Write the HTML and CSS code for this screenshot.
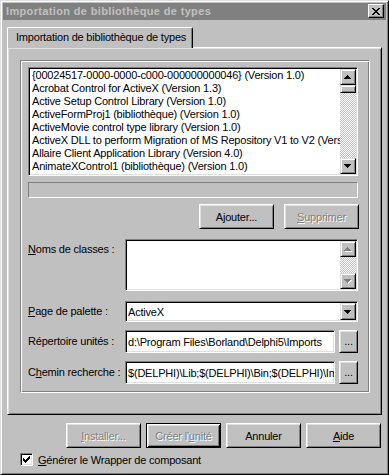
FILE: index.html
```html
<!DOCTYPE html>
<html lang="fr">
<head>
    <meta charset="UTF-8">
    <title>Importation de bibliothèque de types</title>
    <link rel="stylesheet" href="styles.css">
</head>
<body>
    <div class="window">
        <div class="titlebar">
            <span class="title">Importation de bibliothèque de types</span>
            <span class="close">
                <svg width="8" height="7" viewBox="0 0 8 7" shape-rendering="crispEdges">
                    <path d="M0 0h2v1H0z M6 0h2v1H6z M1 1h2v1H1z M5 1h2v1H5z M2 2h4v1H2z M3 3h2v1H3z M2 4h4v1H2z M1 5h2v1H1z M5 5h2v1H5z M0 6h2v1H0z M6 6h2v1H6z" fill="#000"/>
                </svg>
            </span>
        </div>

        <div class="tabs">
            <div class="tab">Importation de bibliothèque de types</div>
        </div>

        <div class="page">
            <div class="group">
                <div class="listbox sunken">
                    <div class="list">
                        <div>{00024517-0000-0000-c000-000000000046} (Version 1.0)</div>
                        <div>Acrobat Control for ActiveX (Version 1.3)</div>
                        <div>Active Setup Control Library (Version 1.0)</div>
                        <div>ActiveFormProj1 (bibliothèque) (Version 1.0)</div>
                        <div>ActiveMovie control type library (Version 1.0)</div>
                        <div>ActiveX DLL to perform Migration of MS Repository V1 to V2 (Version 1.0)</div>
                        <div>Allaire Client Application Library (Version 4.0)</div>
                        <div>AnimateXControl1 (bibliothèque) (Version 1.0)</div>
                        <div>AudioFile Control 1.0 Type Library (Version 1.0)</div>
                    </div>
                    <div class="scrollbar">
                        <span class="sbtn">
                            <svg width="14" height="14" viewBox="1 1 14 14" shape-rendering="crispEdges"><path d="M7 6h1v1h1v1h1v1h1v1H4V9h1V8h1V7h1z" fill="#000"/></svg>
                        </span>
                        <span class="thumb"></span>
                        <span class="track"></span>
                        <span class="sbtn">
                            <svg width="14" height="14" viewBox="1 1 14 14" shape-rendering="crispEdges"><path d="M4 6h7v1h-1v1h-1v1h-1v1H7V9H6V8H5V7H4z" fill="#000"/></svg>
                        </span>
                    </div>
                </div>

                <div class="status"></div>

                <div class="btnrow">
                    <button class="btn">Ajouter...</button>
                    <button class="btn disabled"><u>S</u>upprimer</button>
                </div>

                <div class="row top">
                    <label><u>N</u>oms de classes :</label>
                    <div class="memo sunken">
                        <div class="memo-text"></div>
                        <div class="scrollbar">
                            <span class="sbtn">
                                <svg width="14" height="14" viewBox="1 1 14 14" shape-rendering="crispEdges"><path d="M8 7h1v1h1v1h1v1h1v1H5v-1h1V9h1V8h1z" fill="#fff"/><path d="M7 6h1v1h1v1h1v1h1v1H4V9h1V8h1V7h1z" fill="#808080"/></svg>
                            </span>
                            <span class="track"></span>
                            <span class="sbtn">
                                <svg width="14" height="14" viewBox="1 1 14 14" shape-rendering="crispEdges"><path d="M5 7h7v1h-1v1h-1v1H9v1H8v-1H7V9H6V8H5z" fill="#fff"/><path d="M4 6h7v1h-1v1h-1v1h-1v1H7V9H6V8H5V7H4z" fill="#808080"/></svg>
                            </span>
                        </div>
                    </div>
                </div>

                <div class="row">
                    <label><u>P</u>age de palette :</label>
                    <div class="combo sunken">
                        <span class="field-text">ActiveX</span>
                        <span class="sbtn drop">
                            <svg width="14" height="15" viewBox="1 0 14 15" shape-rendering="crispEdges"><path d="M4 6h7v1h-1v1h-1v1h-1v1H7V9H6V8H5V7H4z" fill="#000"/></svg>
                        </span>
                    </div>
                </div>

                <div class="row">
                    <label>Répertoire unités :</label>
                    <div class="edit sunken"><span class="field-text">d:\Program Files\Borland\Delphi5\Imports</span></div>
                    <button class="btn small">...</button>
                </div>

                <div class="row">
                    <label>C<u>h</u>emin recherche :</label>
                    <div class="edit sunken"><span class="field-text">$(DELPHI)\Lib;$(DELPHI)\Bin;$(DELPHI)\Imports;$(DELPHI)\Projects\Bpl</span></div>
                    <button class="btn small">...</button>
                </div>
            </div>
        </div>

        <div class="footer">
            <button class="btn disabled"><u>I</u>nstaller...</button>
            <button class="btn default disabled">Créer l'<u>u</u>nité</button>
            <button class="btn">Annuler</button>
            <button class="btn"><u>A</u>ide</button>
        </div>

        <div class="check">
            <span class="checkbox">
                <svg width="7" height="7" viewBox="0 0 7 7" shape-rendering="crispEdges">
                    <path d="M0 2h1v3H0z M1 3h1v3H1z M2 4h1v3H2z M3 3h1v3H3z M4 2h1v3H4z M5 1h1v3H5z M6 0h1v3H6z" fill="#000"/>
                </svg>
            </span>
            <span><u>G</u>énérer le Wrapper de composant</span>
        </div>
    </div>
</body>
</html>
```

FILE: styles.css
```css
body {
    margin: 0;
    background-color: #c0c0c0;
}

* {
    box-sizing: border-box;
}

.window {
    width: 389px;
    height: 475px;
    background-color: #c0c0c0;
    border: 1px solid;
    border-color: #dfdfdf #000 #000 #dfdfdf;
    box-shadow: inset 1px 1px #fff, inset -1px -1px #808080;
    padding: 2px;
    display: flex;
    flex-direction: column;
    font-family: "Liberation Sans", Arial, sans-serif;
    font-size: 11px;
    letter-spacing: -0.2px;
    color: #000;
}

/* title bar */
.titlebar {
    height: 17px;
    background-color: #808080;
    color: #c0c0c0;
    display: flex;
    align-items: flex-start;
    padding-left: 3px;
}

.title {
    font-weight: bold;
    letter-spacing: 0.35px;
    line-height: 17px;
}

.close {
    margin-left: auto;
    margin-right: 2px;
    margin-top: 1px;
    width: 16px;
    height: 14px;
    display: flex;
    align-items: center;
    justify-content: center;
    background-color: #c0c0c0;
    border: 1px solid;
    border-color: #fff #000 #000 #fff;
    box-shadow: inset -1px -1px #808080;
}

/* tab */
.tabs {
    margin-top: 7px;
    padding-left: 4px;
    display: flex;
}

.tab {
    position: relative;
    z-index: 1;
    width: 186px;
    height: 21px;
    margin-bottom: -1px;
    background-color: #c0c0c0;
    border-top: 1px solid #fff;
    border-left: 1px solid #fff;
    border-right: 1px solid #000;
    border-radius: 2px 2px 0 0;
    box-shadow: inset -1px 0 #808080;
    padding-left: 8px;
    line-height: 19px;
    white-space: nowrap;
}

.page {
    margin-left: 4px;
    width: 375px;
    height: 368px;
    border: 1px solid;
    border-color: #fff #000 #000 #fff;
    box-shadow: inset 1px 1px #dfdfdf, inset -1px -1px #808080;
    padding: 12px 10px 0 12px;
}

.group {
    width: 350px;
    height: 333px;
    border: 1px solid;
    border-color: #808080 #fff #fff #808080;
    box-shadow: inset 1px 1px #fff, inset -1px -1px #808080;
    padding: 6px 11px 0 7px;
    display: flex;
    flex-direction: column;
}

/* sunken fields */
.sunken {
    background-color: #fff;
    border: 1px solid;
    border-color: #808080 #fff #fff #808080;
    box-shadow: inset 1px 1px #000, inset -1px -1px #dfdfdf;
    padding: 1px;
}

.listbox {
    height: 109px;
    display: flex;
}

.list {
    flex: 1;
    overflow: hidden;
    white-space: nowrap;
    padding: 0 0 0 2px;
    line-height: 13px;
}

.scrollbar {
    width: 16px;
    display: flex;
    flex-direction: column;
}

.sbtn {
    width: 16px;
    height: 16px;
    flex-shrink: 0;
    display: flex;
    align-items: center;
    justify-content: center;
    background-color: #c0c0c0;
    border: 1px solid;
    border-color: #dfdfdf #000 #000 #dfdfdf;
    box-shadow: inset 1px 1px #fff, inset -1px -1px #808080;
}

.thumb {
    height: 8px;
    flex-shrink: 0;
    background-color: #c0c0c0;
    border: 1px solid;
    border-color: #dfdfdf #000 #000 #dfdfdf;
    box-shadow: inset 1px 1px #fff, inset -1px -1px #808080;
}

.track {
    flex: 1;
    background-color: #c0c0c0;
    background-image: conic-gradient(#fff 25%, #c0c0c0 0 50%, #fff 0 75%, #c0c0c0 0);
    background-size: 2px 2px;
}

.status {
    height: 16px;
    margin-top: 6px;
    border: 1px solid;
    border-color: #808080 #fff #fff #808080;
}

/* buttons */
.btn {
    width: 75px;
    height: 25px;
    padding: 0;
    margin: 0;
    font: inherit;
    letter-spacing: inherit;
    color: #000;
    background-color: #c0c0c0;
    border: 1px solid;
    border-color: #fff #000 #000 #fff;
    box-shadow: inset 1px 1px #dfdfdf, inset -1px -1px #808080;
    display: flex;
    align-items: center;
    justify-content: center;
    white-space: nowrap;
}

.btn.default {
    border-color: #000;
    box-shadow: inset 1px 1px #fff, inset -1px -1px #000, inset 2px 2px #dfdfdf, inset -2px -2px #808080;
}

.btn.disabled {
    color: #808080;
    text-shadow: 1px 1px #fff;
}

.btn.small {
    width: 19px;
    height: 23px;
    margin-left: 4px;
    padding-bottom: 1px;
}

.btnrow {
    margin-top: 6px;
    margin-right: -1px;
    display: flex;
    justify-content: flex-end;
    gap: 10px;
}

/* form rows */
.row {
    margin-top: 10px;
    display: flex;
    align-items: center;
}

.row.top {
    align-items: flex-start;
}

.row + .row {
    margin-top: 8px;
}

.row.top + .row {
    margin-top: 10px;
}

.row label {
    width: 97px;
    flex-shrink: 0;
    line-height: 21px;
    white-space: nowrap;
}

.memo {
    flex: 1;
    height: 52px;
    display: flex;
}

.memo-text {
    flex: 1;
}

.combo {
    flex: 1;
    height: 21px;
    display: flex;
    align-items: center;
}

.sbtn.drop {
    margin-left: auto;
    height: 17px;
}

.edit {
    flex: 1;
    height: 23px;
    display: flex;
    align-items: center;
    overflow: hidden;
}

.field-text {
    padding-left: 1px;
    white-space: nowrap;
}

/* footer */
.footer {
    margin-top: 8px;
    padding-right: 5px;
    display: flex;
    justify-content: flex-end;
    gap: 5px;
}

.check {
    margin-top: 5px;
    padding-left: 17px;
    display: flex;
    align-items: center;
    gap: 5px;
}

.checkbox {
    width: 13px;
    height: 13px;
    display: flex;
    align-items: center;
    justify-content: center;
    background-color: #fff;
    border: 1px solid;
    border-color: #808080 #fff #fff #808080;
    box-shadow: inset 1px 1px #000, inset -1px -1px #dfdfdf;
}
```
